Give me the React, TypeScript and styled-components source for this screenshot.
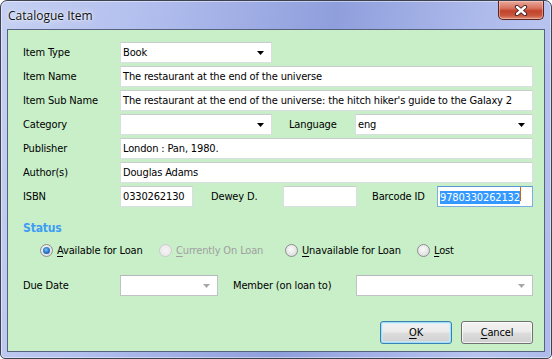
import React from 'react';
import styled, { createGlobalStyle } from 'styled-components';

const UI = `"DejaVu Sans Condensed", "Liberation Sans", sans-serif`;

const Global = createGlobalStyle`
  html, body { margin: 0; padding: 0; background: #ffffff; }
  body { font-family: ${UI}; font-size: 11px; letter-spacing: -0.15px; color: #000; }
  #root { width: 552px; height: 359px; }
`;

const Window = styled.div`
  box-sizing: border-box;
  width: 552px;
  height: 359px;
  border: 1px solid #3d4250;
  border-radius: 7px 7px 5px 5px;
  padding: 0 6px 6px 6px;
  display: flex;
  flex-direction: column;
  background: linear-gradient(100deg, #c6d0f2 0%, #b4c0ee 22%, #a0aee5 40%, #8f9fdc 55%, #a2b0e6 70%, #b8c4ef 88%, #aebbeb 100%);
  box-shadow: inset 0 0 0 1px rgba(255, 255, 255, 0.45);
  overflow: hidden;
`;

const TitleBar = styled.div`
  height: 28px;
  display: flex;
  align-items: flex-start;
  justify-content: space-between;
`;

const Title = styled.div`
  font-family: "Open Sans", "Noto Sans", sans-serif;
  font-size: 12px;
  letter-spacing: 0;
  line-height: 30px;
  padding-left: 1px;
  color: #101010;
  text-shadow: 0 0 6px rgba(255, 255, 255, 0.9), 0 0 2px rgba(255, 255, 255, 0.9);
`;

const CloseButton = styled.div`
  box-sizing: border-box;
  width: 46px;
  height: 19px;
  margin-right: 1px;
  border: 1px solid #5a2420;
  border-top: none;
  border-radius: 0 0 5px 5px;
  background: linear-gradient(180deg, #e9a99b 0%, #d8735f 40%, #c2432a 55%, #c8553d 80%, #df8d73 100%);
  box-shadow: inset 0 0 0 1px rgba(255, 220, 210, 0.45);
  display: flex;
  align-items: center;
  justify-content: center;
`;

const Client = styled.div`
  flex: 1;
  box-sizing: border-box;
  border: 1px solid #56627e;
  background: #c8efc8;
  padding: 12px 11px 7px 15px;
  display: flex;
  flex-direction: column;
`;

const Row = styled.div<{ $mt?: number }>`
  display: flex;
  align-items: center;
  height: 21px;
  margin-top: ${(p) => p.$mt ?? 3}px;
`;

const Label = styled.div<{ $w: number; $ml?: number }>`
  flex: none;
  width: ${(p) => p.$w}px;
  margin-left: ${(p) => p.$ml ?? 0}px;
  white-space: nowrap;
  color: #000;
`;

const Field = styled.div<{ $w?: number; $focus?: boolean; $disabled?: boolean }>`
  box-sizing: border-box;
  height: 21px;
  ${(p) => (p.$w ? `width: ${p.$w}px; flex: none;` : 'flex: 1;')}
  background: #ffffff;
  border: 1px solid ${(p) => (p.$focus ? '#7aaee0' : p.$disabled ? '#bfc3c8' : '#dadee2')};
  border-top-color: ${(p) => (p.$focus ? '#5c96d2' : p.$disabled ? '#b3b7bc' : '#c9cdd2')};
  padding: 0 7px 0 2px;
  display: flex;
  align-items: center;
  justify-content: space-between;
  white-space: nowrap;
  overflow: hidden;
  line-height: 19px;
`;

const Selected = styled.span`
  background: #3399ff;
  color: #ffffff;
  line-height: 14px;
`;

const Caret = styled.span`
  display: inline-block;
  width: 1px;
  height: 14px;
  background: #c8641c;
`;

const Arrow = ({ color = '#000' }: { color?: string }) => (
  <svg width="7" height="4" viewBox="0 0 7 4" style={{ flex: 'none' }}>
    <polygon points="0,0 7,0 3.5,4" fill={color} />
  </svg>
);

const Section = styled.div`
  margin-top: 14px;
  font-weight: bold;
  font-size: 12px;
  line-height: 14px;
  color: #3e9cf6;
`;

const RadioGroup = styled.div`
  display: grid;
  grid-template-columns: 119px 126px 132px auto;
  align-items: center;
  margin-top: 7px;
  padding-left: 17px;
  height: 16px;
`;

const Radio = styled.div<{ $disabled?: boolean }>`
  display: flex;
  align-items: center;
  gap: 4px;
  white-space: nowrap;
  color: ${(p) => (p.$disabled ? '#a0a0a0' : '#000')};
`;

const Circle = styled.span<{ $checked?: boolean; $disabled?: boolean }>`
  box-sizing: border-box;
  flex: none;
  width: 13px;
  height: 13px;
  border-radius: 50%;
  border: 1px solid ${(p) => (p.$disabled ? '#c9cbcc' : '#8b8e91')};
  background: ${(p) => (p.$disabled ? 'radial-gradient(circle at 50% 50%, #f4f4f4, #e6e6e6)' : 'radial-gradient(circle at 45% 40%, #fbfbfb 0%, #e4e4e4 60%, #cfcfcf 100%)')};
  display: flex;
  align-items: center;
  justify-content: center;
  &::after {
    content: '';
    display: ${(p) => (p.$checked ? 'block' : 'none')};
    width: 7px;
    height: 7px;
    border-radius: 50%;
    background: radial-gradient(circle at 45% 40%, #7fc3f6 0%, #2f7fcf 45%, #143f78 100%);
  }
`;

const Key = styled.span`
  text-decoration: underline;
  text-underline-offset: 2px;
`;

const ButtonBar = styled.div`
  margin-top: auto;
  display: flex;
  justify-content: flex-end;
  gap: 9px;
`;

const Button = styled.div<{ $default?: boolean }>`
  box-sizing: border-box;
  width: 72px;
  height: 23px;
  border-radius: 3px;
  border: 1px solid ${(p) => (p.$default ? '#3c7fb1' : '#707070')};
  background: linear-gradient(180deg, #f2f2f2 0%, #ebebeb 48%, #dddddd 52%, #cfcfcf 100%);
  box-shadow: ${(p) => (p.$default ? 'inset 0 0 0 1px #9fe0f8, inset 0 0 0 2px rgba(200,240,255,0.6)' : 'inset 0 0 0 1px rgba(255,255,255,0.7)')};
  display: flex;
  align-items: center;
  justify-content: center;
  color: #000;
`;

export default function App() {
  return (
    <>
      <Global />
      <Window>
        <TitleBar>
          <Title>Catalogue Item</Title>
          <CloseButton>
            <svg width="14" height="11" viewBox="0 0 14 11">
              <path d="M3 2 L11 9 M11 2 L3 9" stroke="#3a1f1c" strokeWidth="4.2" strokeLinecap="round" fill="none" />
              <path d="M3 2 L11 9 M11 2 L3 9" stroke="#ffffff" strokeWidth="2.4" strokeLinecap="round" fill="none" />
            </svg>
          </CloseButton>
        </TitleBar>
        <Client>
          <Row $mt={0}>
            <Label $w={97}>Item Type</Label>
            <Field $w={152}>
              <span>Book</span>
              <Arrow />
            </Field>
          </Row>
          <Row>
            <Label $w={97}>Item Name</Label>
            <Field>The restaurant at the end of the universe</Field>
          </Row>
          <Row>
            <Label $w={97}>Item Sub Name</Label>
            <Field>The restaurant at the end of the universe: the hitch hiker's guide to the Galaxy 2</Field>
          </Row>
          <Row>
            <Label $w={97}>Category</Label>
            <Field $w={152}>
              <span />
              <Arrow />
            </Field>
            <Label $w={66} $ml={17}>Language</Label>
            <Field>
              <span>eng</span>
              <Arrow />
            </Field>
          </Row>
          <Row>
            <Label $w={97}>Publisher</Label>
            <Field>London : Pan, 1980.</Field>
          </Row>
          <Row>
            <Label $w={97}>Author(s)</Label>
            <Field>Douglas Adams</Field>
          </Row>
          <Row>
            <Label $w={97}>ISBN</Label>
            <Field $w={73}>0330262130</Field>
            <Label $w={72} $ml={18}>Dewey D.</Label>
            <Field $w={74} />
            <Label $w={65} $ml={15}>Barcode ID</Label>
            <Field $focus>
              <span>
                <Selected>9780330262132</Selected>
                <Caret />
              </span>
            </Field>
          </Row>
          <Section>Status</Section>
          <RadioGroup>
            <Radio>
              <Circle $checked />
              <span><Key>A</Key>vailable for Loan</span>
            </Radio>
            <Radio $disabled>
              <Circle $disabled />
              <span><Key>C</Key>urrently On Loan</span>
            </Radio>
            <Radio>
              <Circle />
              <span><Key>U</Key>navailable for Loan</span>
            </Radio>
            <Radio>
              <Circle />
              <span><Key>L</Key>ost</span>
            </Radio>
          </RadioGroup>
          <Row $mt={17}>
            <Label $w={97}>Due Date</Label>
            <Field $w={98} $disabled>
              <span />
              <Arrow color="#a8a8a8" />
            </Field>
            <Label $w={123} $ml={15}>Member (on loan to)</Label>
            <Field $disabled>
              <span />
              <Arrow color="#a8a8a8" />
            </Field>
          </Row>
          <ButtonBar>
            <Button $default><span><Key>O</Key>K</span></Button>
            <Button><span><Key>C</Key>ancel</span></Button>
          </ButtonBar>
        </Client>
      </Window>
    </>
  );
}
